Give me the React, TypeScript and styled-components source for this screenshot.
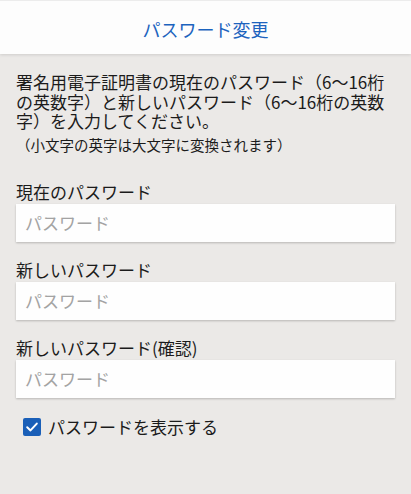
import React, { useState } from "react";
import styled, { createGlobalStyle } from "styled-components";

const Global = createGlobalStyle`
  html, body {
    margin: 0;
    padding: 0;
    background: #ebe9e7;
    font-family: "Noto Sans CJK JP", "Noto Sans", sans-serif;
    color: #1b1b1b;
  }
  * { box-sizing: border-box; }
`;

const Page = styled.div`
  min-height: 494px;
  background: #ebe9e7;
  display: flex;
  flex-direction: column;
`;

const Header = styled.header`
  height: 54px;
  background: #fdfdfd;
  border-top: 1px solid #ececec;
  box-shadow: 0 1px 3px rgba(0, 0, 0, 0.12);
  display: flex;
  align-items: center;
  justify-content: center;
  position: relative;
  z-index: 1;
`;

const Title = styled.h1`
  margin: 3px 0 0;
  font-size: 18px;
  font-weight: 400;
  color: #1c63be;
  letter-spacing: 0;
`;

const Content = styled.main`
  padding: 18px 16px 0;
  display: flex;
  flex-direction: column;
`;

const Lead = styled.p`
  margin: 0;
  font-size: 17px;
  line-height: 19.5px;
  color: #1b1b1b;
`;

const Note = styled.p`
  margin: 5px 0 0;
  font-size: 14.5px;
  line-height: 18px;
  color: #1b1b1b;
`;

const Fields = styled.div`
  margin-top: 28px;
  display: flex;
  flex-direction: column;
  gap: 18px;
`;

const Field = styled.label`
  display: flex;
  flex-direction: column;
  gap: 2px;
`;

const Label = styled.span`
  font-size: 17px;
  line-height: 20px;
  color: #1b1b1b;
`;

const Input = styled.input`
  height: 38px;
  width: 100%;
  border: none;
  outline: none;
  background: #fefefe;
  box-shadow: 0 1px 2px rgba(0, 0, 0, 0.22);
  padding: 0 9px;
  font-family: "Noto Sans CJK JP", "Noto Sans", sans-serif;
  font-size: 17px;
  color: #1b1b1b;
  &::placeholder {
    color: #a3a3a3;
  }
`;

const CheckRow = styled.label`
  margin-top: 19px;
  padding-left: 7px;
  display: flex;
  align-items: center;
  gap: 7px;
  cursor: pointer;
`;

const Box = styled.span<{ $on: boolean }>`
  width: 18px;
  height: 18px;
  border-radius: 2px;
  background: ${(p) => (p.$on ? "#1a5fb8" : "#fff")};
  border: ${(p) => (p.$on ? "none" : "2px solid #777")};
  display: flex;
  align-items: center;
  justify-content: center;
`;

const HiddenCheck = styled.input`
  position: absolute;
  opacity: 0;
  width: 0;
  height: 0;
`;

const CheckText = styled.span`
  font-size: 17px;
  line-height: 20px;
  color: #1b1b1b;
`;

const fields = ["現在のパスワード", "新しいパスワード", "新しいパスワード(確認)"];

export default function App() {
  const [show, setShow] = useState(true);
  return (
    <>
      <Global />
      <Page>
        <Header>
          <Title>パスワード変更</Title>
        </Header>
        <Content>
          <Lead>
            署名用電子証明書の現在のパスワード（6～16桁の英数字）と新しいパスワード（6～16桁の英数字）を入力してください。
          </Lead>
          <Note>（小文字の英字は大文字に変換されます）</Note>
          <Fields>
            {fields.map((f) => (
              <Field key={f}>
                <Label>{f}</Label>
                <Input type={show ? "text" : "password"} placeholder="パスワード" />
              </Field>
            ))}
          </Fields>
          <CheckRow>
            <HiddenCheck
              type="checkbox"
              checked={show}
              onChange={(e) => setShow(e.target.checked)}
            />
            <Box $on={show}>
              {show && (
                <svg width="14" height="14" viewBox="0 0 14 14">
                  <path
                    d="M2.2 7.3 L5.5 10.4 L11.8 3.6"
                    fill="none"
                    stroke="#fff"
                    strokeWidth="2"
                    strokeLinecap="round"
                    strokeLinejoin="round"
                  />
                </svg>
              )}
            </Box>
            <CheckText>パスワードを表示する</CheckText>
          </CheckRow>
        </Content>
      </Page>
    </>
  );
}
